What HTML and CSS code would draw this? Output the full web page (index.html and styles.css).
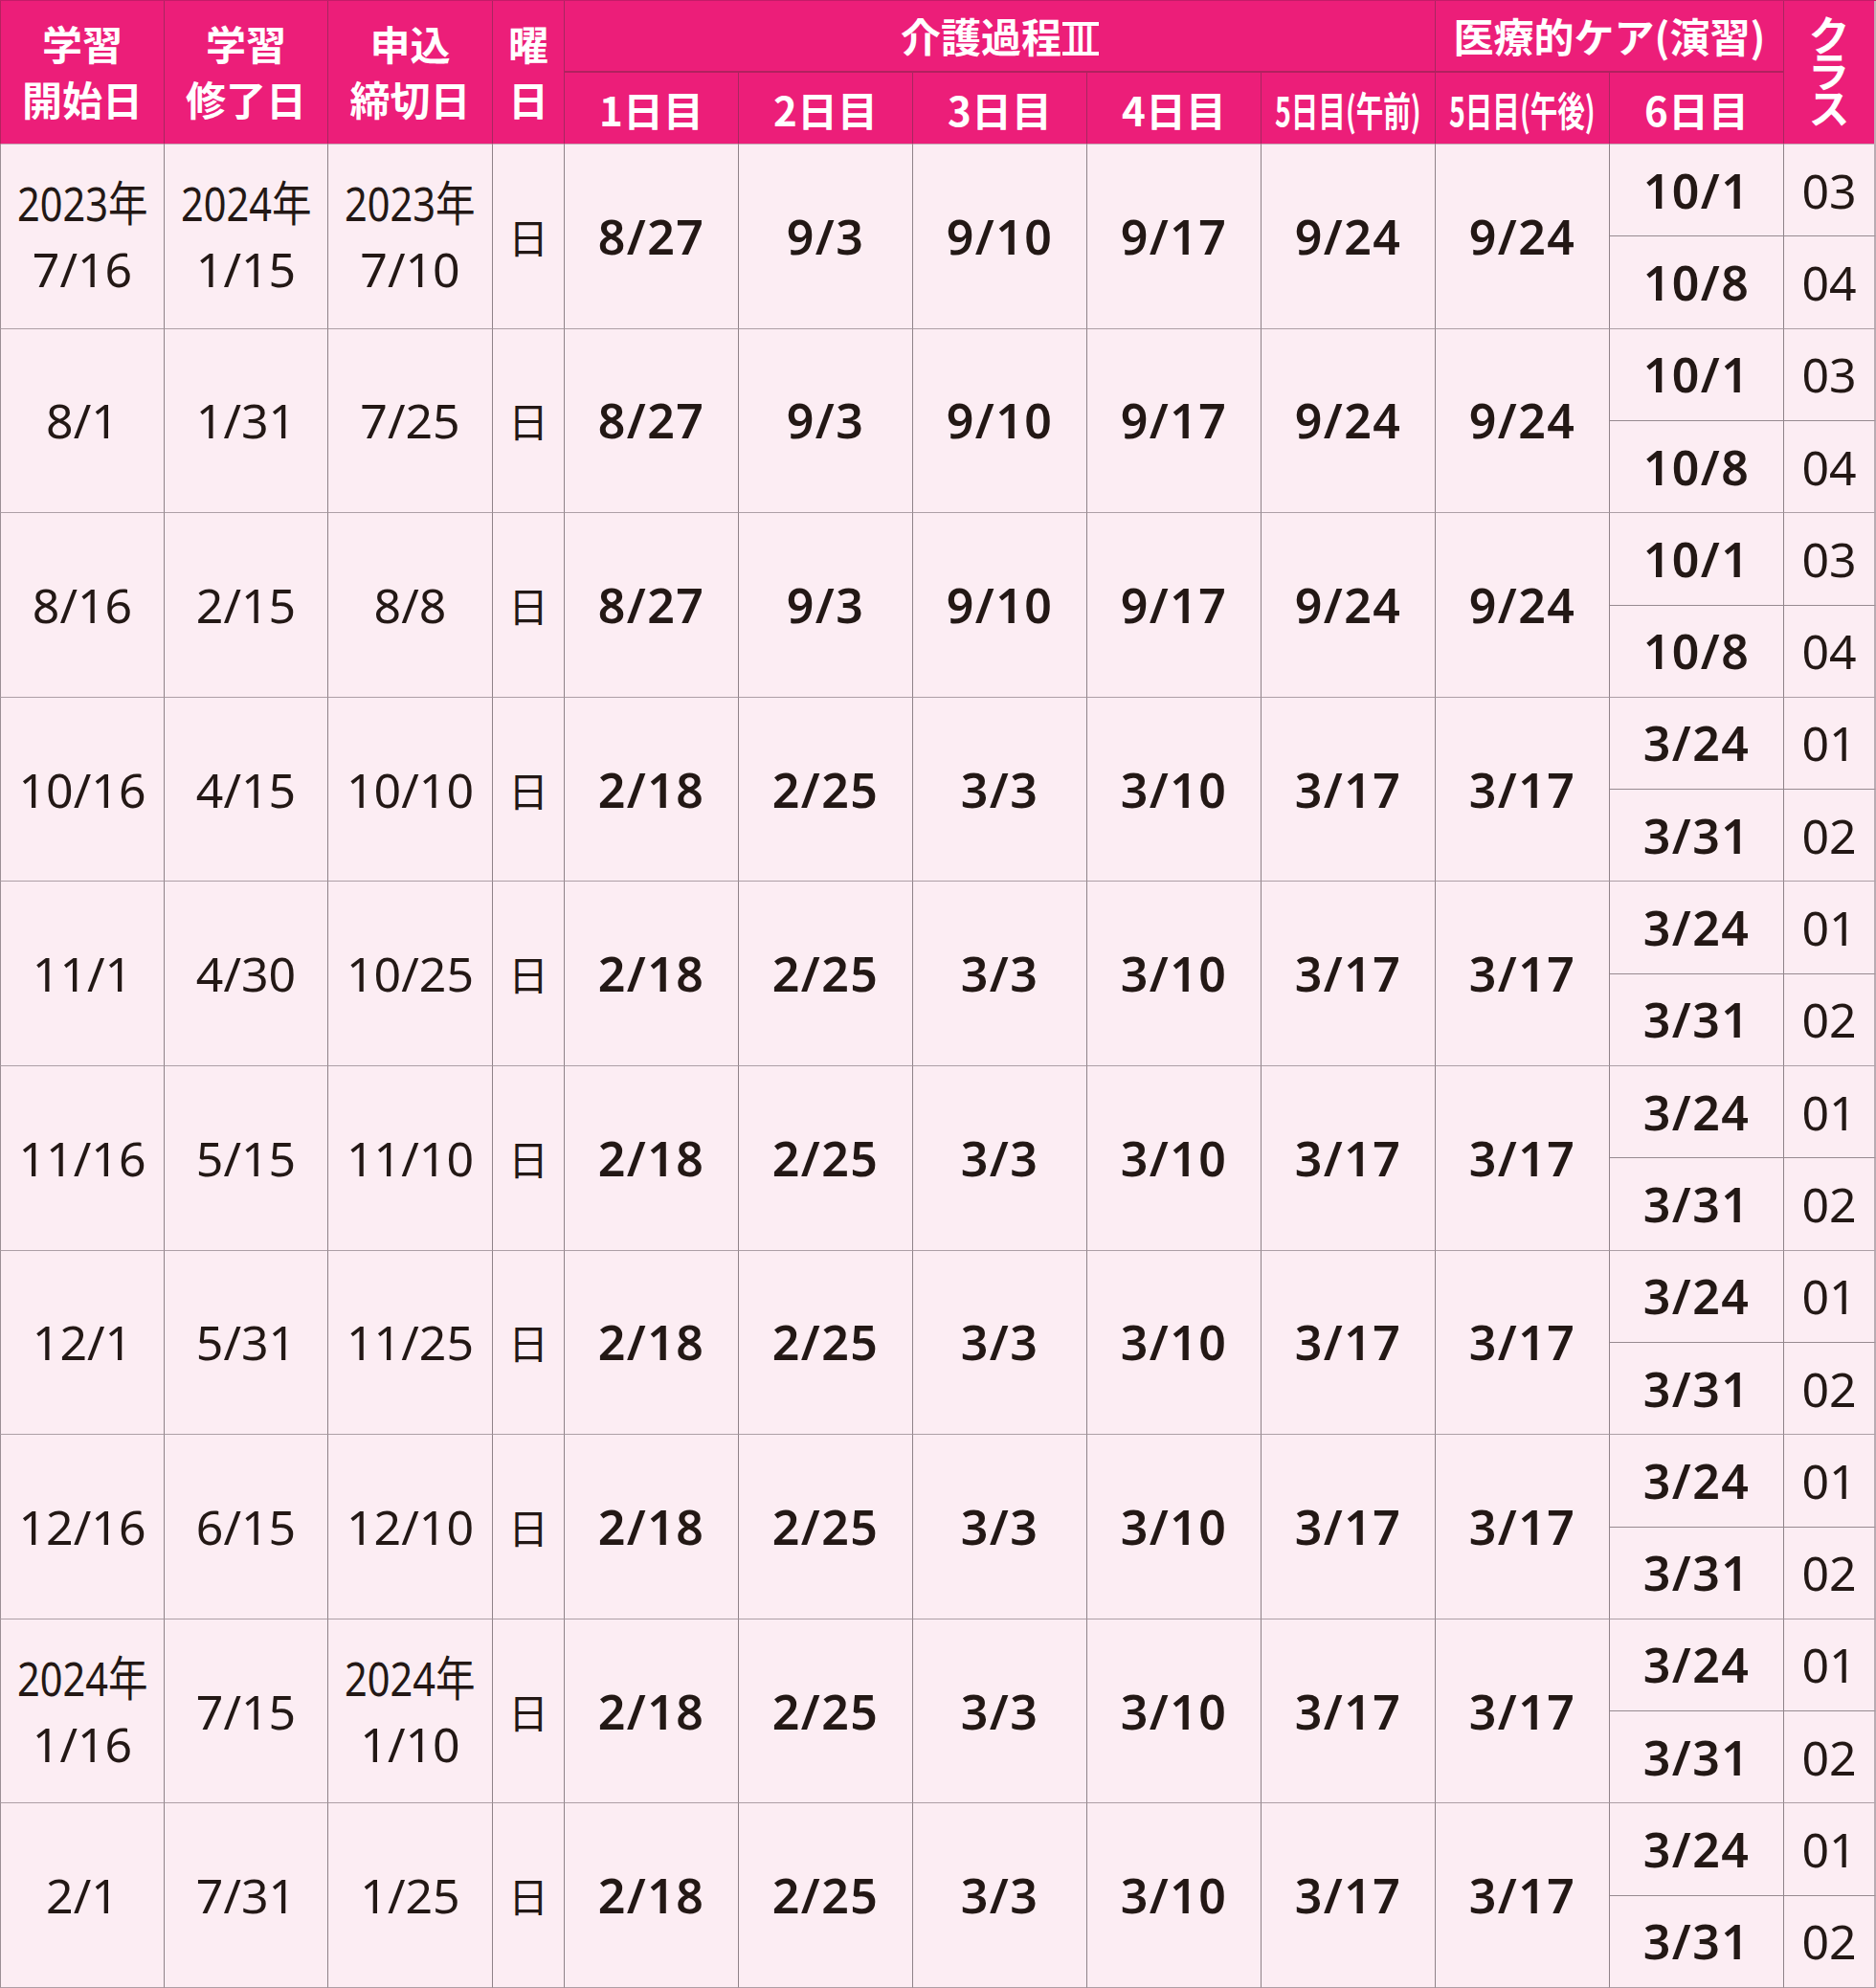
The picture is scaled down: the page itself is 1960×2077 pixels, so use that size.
FILE: index.html
```html
<!DOCTYPE html>
<html lang="ja">
<head>
<meta charset="utf-8">
<title>介護過程Ⅲ・医療的ケア 日程表</title>
<link rel="stylesheet" href="styles.css">
</head>
<body>
<div class="sheet">
  <div class="h rs2 first"><span>学習<br>開始日</span></div>
  <div class="h rs2"><span>学習<br>修了日</span></div>
  <div class="h rs2"><span>申込<br>締切日</span></div>
  <div class="h rs2"><span>曜<br>日</span></div>
  <div class="h top cs5"><span>介護過程<span class="roman">Ⅲ</span></span></div>
  <div class="h top cs2">医療的ケア(演習)</div>
  <div class="h rs2 last"><span class="vert">クラス</span></div>
  <div class="h sh">1日目</div>
  <div class="h sh">2日目</div>
  <div class="h sh">3日目</div>
  <div class="h sh">4日目</div>
  <div class="h sh"><span class="cond">5日目(午前)</span></div>
  <div class="h sh"><span class="cond">5日目(午後)</span></div>
  <div class="h sh">6日目</div>

  <!-- row 1 -->
  <div class="c rs2 first"><span class="two"><span class="yr">2023年</span><br>7/16</span></div>
  <div class="c rs2"><span class="two"><span class="yr">2024年</span><br>1/15</span></div>
  <div class="c rs2"><span class="two"><span class="yr">2023年</span><br>7/10</span></div>
  <div class="c rs2 wd">日</div>
  <div class="c rs2 d">8/27</div>
  <div class="c rs2 d">9/3</div>
  <div class="c rs2 d">9/10</div>
  <div class="c rs2 d">9/17</div>
  <div class="c rs2 d">9/24</div>
  <div class="c rs2 d">9/24</div>
  <div class="c d sub">10/1</div>
  <div class="c sub last">03</div>
  <div class="c d">10/8</div>
  <div class="c last">04</div>

  <!-- row 2 -->
  <div class="c rs2 first">8/1</div>
  <div class="c rs2">1/31</div>
  <div class="c rs2">7/25</div>
  <div class="c rs2 wd">日</div>
  <div class="c rs2 d">8/27</div>
  <div class="c rs2 d">9/3</div>
  <div class="c rs2 d">9/10</div>
  <div class="c rs2 d">9/17</div>
  <div class="c rs2 d">9/24</div>
  <div class="c rs2 d">9/24</div>
  <div class="c d sub">10/1</div>
  <div class="c sub last">03</div>
  <div class="c d">10/8</div>
  <div class="c last">04</div>

  <!-- row 3 -->
  <div class="c rs2 first">8/16</div>
  <div class="c rs2">2/15</div>
  <div class="c rs2">8/8</div>
  <div class="c rs2 wd">日</div>
  <div class="c rs2 d">8/27</div>
  <div class="c rs2 d">9/3</div>
  <div class="c rs2 d">9/10</div>
  <div class="c rs2 d">9/17</div>
  <div class="c rs2 d">9/24</div>
  <div class="c rs2 d">9/24</div>
  <div class="c d sub">10/1</div>
  <div class="c sub last">03</div>
  <div class="c d">10/8</div>
  <div class="c last">04</div>

  <!-- row 4 -->
  <div class="c rs2 first">10/16</div>
  <div class="c rs2">4/15</div>
  <div class="c rs2">10/10</div>
  <div class="c rs2 wd">日</div>
  <div class="c rs2 d">2/18</div>
  <div class="c rs2 d">2/25</div>
  <div class="c rs2 d">3/3</div>
  <div class="c rs2 d">3/10</div>
  <div class="c rs2 d">3/17</div>
  <div class="c rs2 d">3/17</div>
  <div class="c d sub">3/24</div>
  <div class="c sub last">01</div>
  <div class="c d">3/31</div>
  <div class="c last">02</div>

  <!-- row 5 -->
  <div class="c rs2 first">11/1</div>
  <div class="c rs2">4/30</div>
  <div class="c rs2">10/25</div>
  <div class="c rs2 wd">日</div>
  <div class="c rs2 d">2/18</div>
  <div class="c rs2 d">2/25</div>
  <div class="c rs2 d">3/3</div>
  <div class="c rs2 d">3/10</div>
  <div class="c rs2 d">3/17</div>
  <div class="c rs2 d">3/17</div>
  <div class="c d sub">3/24</div>
  <div class="c sub last">01</div>
  <div class="c d">3/31</div>
  <div class="c last">02</div>

  <!-- row 6 -->
  <div class="c rs2 first">11/16</div>
  <div class="c rs2">5/15</div>
  <div class="c rs2">11/10</div>
  <div class="c rs2 wd">日</div>
  <div class="c rs2 d">2/18</div>
  <div class="c rs2 d">2/25</div>
  <div class="c rs2 d">3/3</div>
  <div class="c rs2 d">3/10</div>
  <div class="c rs2 d">3/17</div>
  <div class="c rs2 d">3/17</div>
  <div class="c d sub">3/24</div>
  <div class="c sub last">01</div>
  <div class="c d">3/31</div>
  <div class="c last">02</div>

  <!-- row 7 -->
  <div class="c rs2 first">12/1</div>
  <div class="c rs2">5/31</div>
  <div class="c rs2">11/25</div>
  <div class="c rs2 wd">日</div>
  <div class="c rs2 d">2/18</div>
  <div class="c rs2 d">2/25</div>
  <div class="c rs2 d">3/3</div>
  <div class="c rs2 d">3/10</div>
  <div class="c rs2 d">3/17</div>
  <div class="c rs2 d">3/17</div>
  <div class="c d sub">3/24</div>
  <div class="c sub last">01</div>
  <div class="c d">3/31</div>
  <div class="c last">02</div>

  <!-- row 8 -->
  <div class="c rs2 first">12/16</div>
  <div class="c rs2">6/15</div>
  <div class="c rs2">12/10</div>
  <div class="c rs2 wd">日</div>
  <div class="c rs2 d">2/18</div>
  <div class="c rs2 d">2/25</div>
  <div class="c rs2 d">3/3</div>
  <div class="c rs2 d">3/10</div>
  <div class="c rs2 d">3/17</div>
  <div class="c rs2 d">3/17</div>
  <div class="c d sub">3/24</div>
  <div class="c sub last">01</div>
  <div class="c d">3/31</div>
  <div class="c last">02</div>

  <!-- row 9 -->
  <div class="c rs2 first"><span class="two"><span class="yr">2024年</span><br>1/16</span></div>
  <div class="c rs2">7/15</div>
  <div class="c rs2"><span class="two"><span class="yr">2024年</span><br>1/10</span></div>
  <div class="c rs2 wd">日</div>
  <div class="c rs2 d">2/18</div>
  <div class="c rs2 d">2/25</div>
  <div class="c rs2 d">3/3</div>
  <div class="c rs2 d">3/10</div>
  <div class="c rs2 d">3/17</div>
  <div class="c rs2 d">3/17</div>
  <div class="c d sub">3/24</div>
  <div class="c sub last">01</div>
  <div class="c d">3/31</div>
  <div class="c last">02</div>

  <!-- row 10 -->
  <div class="c rs2 first">2/1</div>
  <div class="c rs2">7/31</div>
  <div class="c rs2">1/25</div>
  <div class="c rs2 wd">日</div>
  <div class="c rs2 d">2/18</div>
  <div class="c rs2 d">2/25</div>
  <div class="c rs2 d">3/3</div>
  <div class="c rs2 d">3/10</div>
  <div class="c rs2 d">3/17</div>
  <div class="c rs2 d">3/17</div>
  <div class="c d sub">3/24</div>
  <div class="c sub last">01</div>
  <div class="c d">3/31</div>
  <div class="c last">02</div>
</div>
</body>
</html>
```
FILE: styles.css
```css
* { box-sizing: border-box; }

html, body {
  margin: 0;
  padding: 0;
  background: #fcedf3;
}

.sheet {
  width: 1960px;
  height: 2077px;
  display: grid;
  grid-template-columns: 172px 171px 172px 75px repeat(7, 182px) 96px;
  grid-template-rows: 75px 75px repeat(20, 1fr);
  background: #fcedf3;
  border-top: 1px solid #c41b68;
}

.h, .c {
  display: flex;
  align-items: center;
  justify-content: center;
  text-align: center;
  white-space: nowrap;
}

/* header */
.h {
  background: #ec1e79;
  color: #ffffff;
  font-family: "Noto Sans CJK JP", "Noto Sans", sans-serif;
  font-weight: 700;
  font-size: 42px;
  line-height: 58px;
  border-right: 1px solid #a82660;
  border-bottom: 1px solid #c3acb6;
}
.h.rs2 { padding-bottom: 4px; }
.h.first { border-left: 1px solid #b5215f; }
.h.top { border-bottom: 2px solid #b2215f; padding-bottom: 2px; }
.h.last { border-right: 2px solid #c3acb6; }
.h.sh { padding-top: 2px; }

.roman {
  display: inline-block;
  font-family: "Noto Sans", sans-serif;
  font-weight: 700;
  font-size: 38px;
  line-height: 27px;
  border-top: 4px solid #ffffff;
  border-bottom: 4px solid #ffffff;
  margin-left: 1px;
}

.rs2 { grid-row: span 2; }
.cs5 { grid-column: span 5; }
.cs2 { grid-column: span 2; }

.cond {
  display: inline-block;
  transform: scaleX(0.68);
}

.vert {
  writing-mode: vertical-rl;
  text-orientation: upright;
  font-size: 44px;
  letter-spacing: -6px;
  line-height: 1;
  margin-top: -4px;
}

/* body */
.c {
  color: #231815;
  font-family: "Noto Sans", "Noto Sans CJK JP", sans-serif;
  font-weight: 400;
  font-size: 50px;
  line-height: 60px;
  border-right: 1px solid #8f8288;
  border-bottom: 1px solid #ad9fa6;
}
.c.first { border-left: 1px solid #9c8f95; }
.c.last { border-right: 2px solid #b9abb2; }
.c.sub { border-bottom: 1px solid #978a90; }

.c.d {
  font-weight: 600;
  letter-spacing: 1.5px;
}

.c.wd {
  font-family: "Noto Sans CJK JP", sans-serif;
  font-size: 42px;
}

.two {
  line-height: 69px;
}

.yr {
  display: inline-block;
  transform: scaleX(0.83);
  line-height: 69px;
}
```
